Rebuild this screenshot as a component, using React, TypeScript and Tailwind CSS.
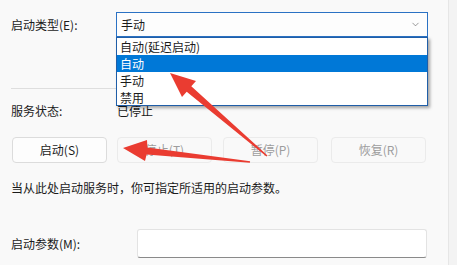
import { ChevronDown } from "lucide-react";

const font = { fontFamily: '"Noto Sans CJK SC", "Noto Sans", sans-serif' };

function Btn({ label, enabled, className }: { label: string; enabled?: boolean; className?: string }) {
    return (
        <div
            className={`w-[95px] h-[26px] flex items-center justify-center rounded-[4px] border text-[12px] ${
                enabled ? "bg-[#fdfdfd] border-[#dcdcdc] text-[#1b1b1b]" : "bg-[#f9f9f9] border-[#ebebeb] text-[#9d9d9d]"
            } ${className ?? ""}`}
        >
            {label}
        </div>
    );
}

export default function App() {
    return (
        <div className="relative w-[457px] h-[265px] overflow-hidden flex bg-[#f9f9f9] text-[#1b1b1b]" style={font}>
            {/* Main panel */}
            <div className="w-[448px] pl-[11px] pt-[12px] flex flex-col text-[12px] leading-[16px]">
                <div className="flex items-center h-[25px]">
                    <span className="w-[105px]">启动类型(E):</span>
                    <div className="w-[312px] h-[25px] bg-[#fdfdfd] border border-[#2b72c4] flex items-center justify-between pl-[4px] pr-[6px]">
                        <span>手动</span>
                        <ChevronDown size={11} strokeWidth={1.3} className="text-[#555]" />
                    </div>
                </div>

                <div className="mt-[51px] h-px w-[417px] bg-[#dedede]" />

                <div className="mt-[14px] flex h-[16px]">
                    <span className="w-[106px]">服务状态:</span>
                    <span>已停止</span>
                </div>

                <div className="mt-[18px] flex">
                    <Btn label="启动(S)" enabled className="ml-[1px]" />
                    <Btn label="停止(T)" className="ml-[10px]" />
                    <Btn label="暂停(P)" className="ml-[11px]" />
                    <Btn label="恢复(R)" className="ml-[13px]" />
                </div>

                <p className="mt-[17px]">当从此处启动服务时，你可指定所适用的启动参数。</p>

                <div className="mt-[33px] flex items-center">
                    <span className="w-[126px]">启动参数(M):</span>
                    <div className="w-[290px] h-[29px] bg-white border border-[#e3e3e3] border-b-[#8a8a8a] rounded-[3px]" />
                </div>
            </div>

            {/* Right strip */}
            <div className="flex-1 border-l border-[#e6e6e6] bg-[#f3f3f3]" />

            {/* Open dropdown list */}
            <div className="absolute left-[116px] top-[37px] w-[312px] h-[69px] bg-white border border-[#1f5ea8] shadow-[2px_2px_3px_rgba(0,0,0,0.35)] flex flex-col text-[12px]">
                <div className="h-[17px] flex items-center pl-[3px]">自动(延迟启动)</div>
                <div className="h-[17px] flex items-center pl-[3px] bg-[#0078d7] text-white">自动</div>
                <div className="h-[17px] flex items-center pl-[3px]">手动</div>
                <div className="h-[17px] flex items-center pl-[3px]">禁用</div>
            </div>

            {/* Red annotation arrows */}
            <svg className="absolute inset-0 pointer-events-none" width="457" height="265" viewBox="0 0 457 265">
                <polygon
                    fill="#ea3c31"
                    points="170,73 196,81 191.3,86.3 267.5,155.4 266.5,156.6 186.7,91.7 182,97"
                />
                <polygon
                    fill="#ea3c31"
                    points="123,148 147,140 147.4,147.5 250.1,161.2 249.9,162.8 146.6,154.5 145,161"
                />
            </svg>
        </div>
    );
}
